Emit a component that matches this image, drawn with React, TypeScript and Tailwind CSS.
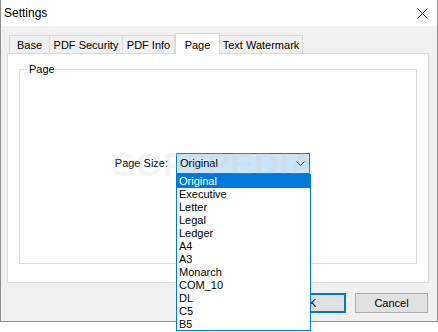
import React from 'react';

const tabs = [
  { label: 'Base', width: 'w-[41px]' },
  { label: 'PDF Security', width: 'w-[74px]' },
  { label: 'PDF Info', width: 'w-[53px]' },
  { label: 'Page', width: 'w-[45px]', active: true },
  { label: 'Text Watermark', width: 'w-[84px]' },
];

const sizes = ['Original', 'Executive', 'Letter', 'Legal', 'Ledger', 'A4', 'A3', 'Monarch', 'COM_10', 'DL', 'C5', 'B5'];

const App: React.FC = () => {
  return (
    <div className="relative w-[438px] h-[332px] bg-white overflow-hidden text-[11px] text-black font-['Liberation_Sans',Arial,sans-serif]">
      {/* window */}
      <div className="flex flex-col h-[322px] border-l border-r border-b border-[#8e8e8e]">
        <div className="flex items-center justify-between h-[26px] bg-white pl-[3px] pr-[9px]">
          <span className="text-[12px] leading-none">Settings</span>
          <svg width="11" height="11" viewBox="0 0 11 11" className="mt-[1px]">
            <path d="M0.5 0.5 L10.5 10.5 M10.5 0.5 L0.5 10.5" stroke="#111" strokeWidth="1" fill="none" />
          </svg>
        </div>

        <div className="flex flex-col flex-1 bg-[#f0f0f0] pt-[7px] pl-[6px] pr-[8px]">
          {/* tab strip */}
          <div className="flex items-end h-[20px] pl-[2px]">
            {tabs.map((t) =>
              t.active ? (
                <div
                  key={t.label}
                  className={`${t.width} relative z-10 -mb-px h-[21px] bg-white border border-b-0 border-[#d9d9d9] flex items-start justify-center pt-[3px]`}
                >
                  {t.label}
                </div>
              ) : (
                <div
                  key={t.label}
                  className={`${t.width} h-[18px] bg-[#f0f0f0] border border-b-0 border-[#d9d9d9] -ml-px first:ml-0 flex items-center justify-center pt-px`}
                >
                  {t.label}
                </div>
              )
            )}
          </div>

          {/* tab panel */}
          <div className="h-[230px] bg-white border border-[#d9d9d9] pt-[15px] px-[11px]">
            <div className="relative h-[195px] border border-[#dcdcdc]">
              <span className="absolute -top-[8px] left-[7px] bg-white px-[2px] leading-[14px]">Page</span>
              <div className="flex items-center pt-[83px]">
                <span className="w-[148px] text-right">Page Size:</span>
                <div className="ml-[8px] w-[134px] h-[21px] border border-[#0078d7] bg-[#cce4f7] flex items-center justify-between pl-[3px] pr-[4px]">
                  <span>Original</span>
                  <svg width="9" height="5" viewBox="0 0 9 5">
                    <path d="M0.5 0.5 L4.5 4.5 L8.5 0.5" stroke="#333" strokeWidth="1" fill="none" />
                  </svg>
                </div>
              </div>
            </div>
          </div>

          {/* buttons */}
          <div className="flex justify-end gap-[9px] pt-[10px] pr-px">
            <button className="w-[75px] h-[20px] bg-[#e1e1e1] border-2 border-[#0078d7]">OK</button>
            <button className="w-[73px] h-[20px] bg-[#e1e1e1] border border-[#adadad]">Cancel</button>
          </div>
        </div>
      </div>

      {/* watermark */}
      <div className="absolute left-[112px] top-[147px] pointer-events-none text-[34px] font-bold tracking-[1px] leading-none text-[#c8c8c8]/20">
        SOFTPEDIA
      </div>

      {/* open dropdown list */}
      <div className="absolute left-[176px] top-[174px] w-[135px] h-[157px] bg-white border border-[#0078d7] overflow-hidden">
        {sizes.map((s, i) => (
          <div
            key={s}
            className={`h-[13px] leading-[13px] pl-[2px] ${i === 0 ? 'bg-[#0078d7] text-white' : ''}`}
          >
            {s}
          </div>
        ))}
      </div>
    </div>
  );
};

export default App;
